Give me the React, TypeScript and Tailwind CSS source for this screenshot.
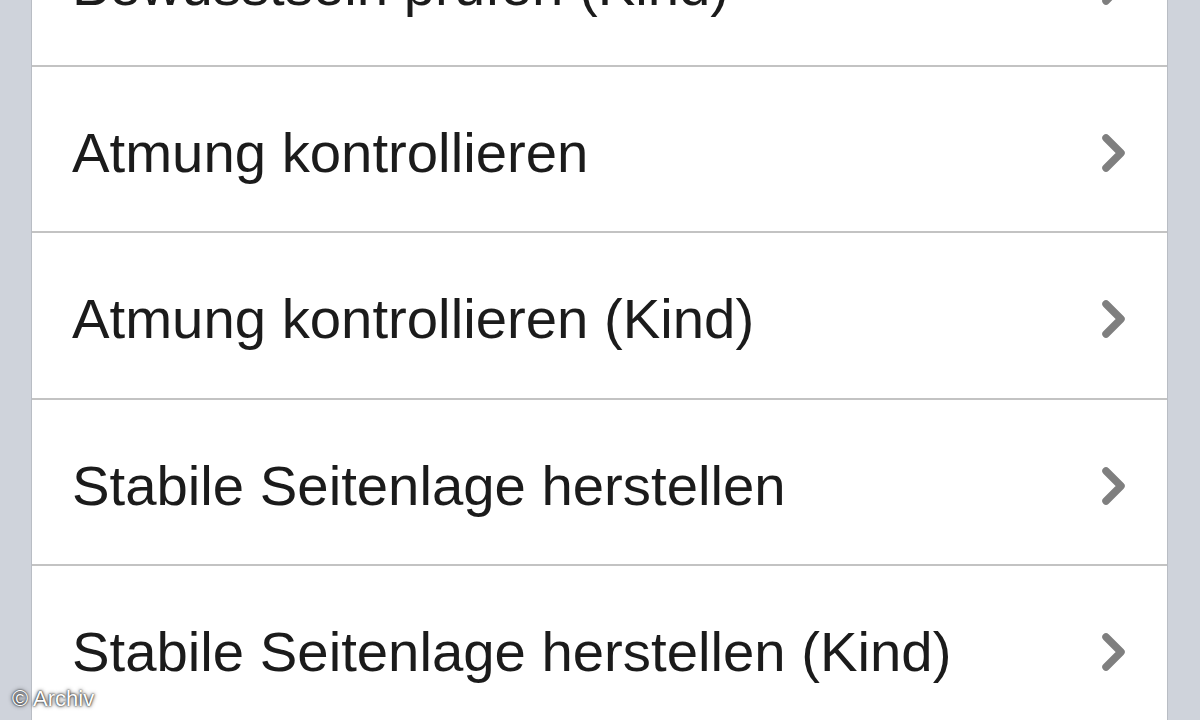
import React from 'react';

const rows = [
  'Bewusstsein prüfen (Kind)',
  'Atmung kontrollieren',
  'Atmung kontrollieren (Kind)',
  'Stabile Seitenlage herstellen',
  'Stabile Seitenlage herstellen (Kind)',
];

function Chevron() {
  return (
    <svg width="38" height="46" viewBox="0 0 38 46" aria-hidden className="shrink-0">
      <path d="M12 8 L27 23 L12 38" fill="none" stroke="#7f7f7f" strokeWidth="7.5" strokeLinecap="round" strokeLinejoin="round" />
    </svg>
  );
}

export default function App() {
  return (
    <div
      className="relative flex h-[720px] w-[1200px] overflow-hidden bg-white"
      style={{ fontFamily: '"Liberation Sans", Arial, sans-serif' }}
    >
      {/* left gutter */}
      <div className="w-[32px] shrink-0 border-r border-[#b9bdc4] bg-[#cfd3db]" />

      {/* table rows */}
      <div className="flex-1">
        <div className="mt-[-100px]">
          {rows.map((label) => (
            <div
              key={label}
              className="flex h-[166.5px] items-center justify-between border-b-2 border-[#c3c3c3] pl-[40px] pr-[35px] pt-[8px]"
            >
              <span className="text-[56.3px] leading-none text-[#1b1b1b]">{label}</span>
              <Chevron />
            </div>
          ))}
        </div>
      </div>

      {/* right gutter */}
      <div className="w-[33px] shrink-0 border-l border-[#b9bdc4] bg-[#cfd3db]" />

      {/* watermark */}
      <div className="absolute bottom-[10px] left-[12px] text-[22px] leading-none text-white [text-shadow:0_0_2px_rgba(0,0,0,1),0_0_4px_rgba(0,0,0,0.8)]">
        © Archiv
      </div>
    </div>
  );
}
